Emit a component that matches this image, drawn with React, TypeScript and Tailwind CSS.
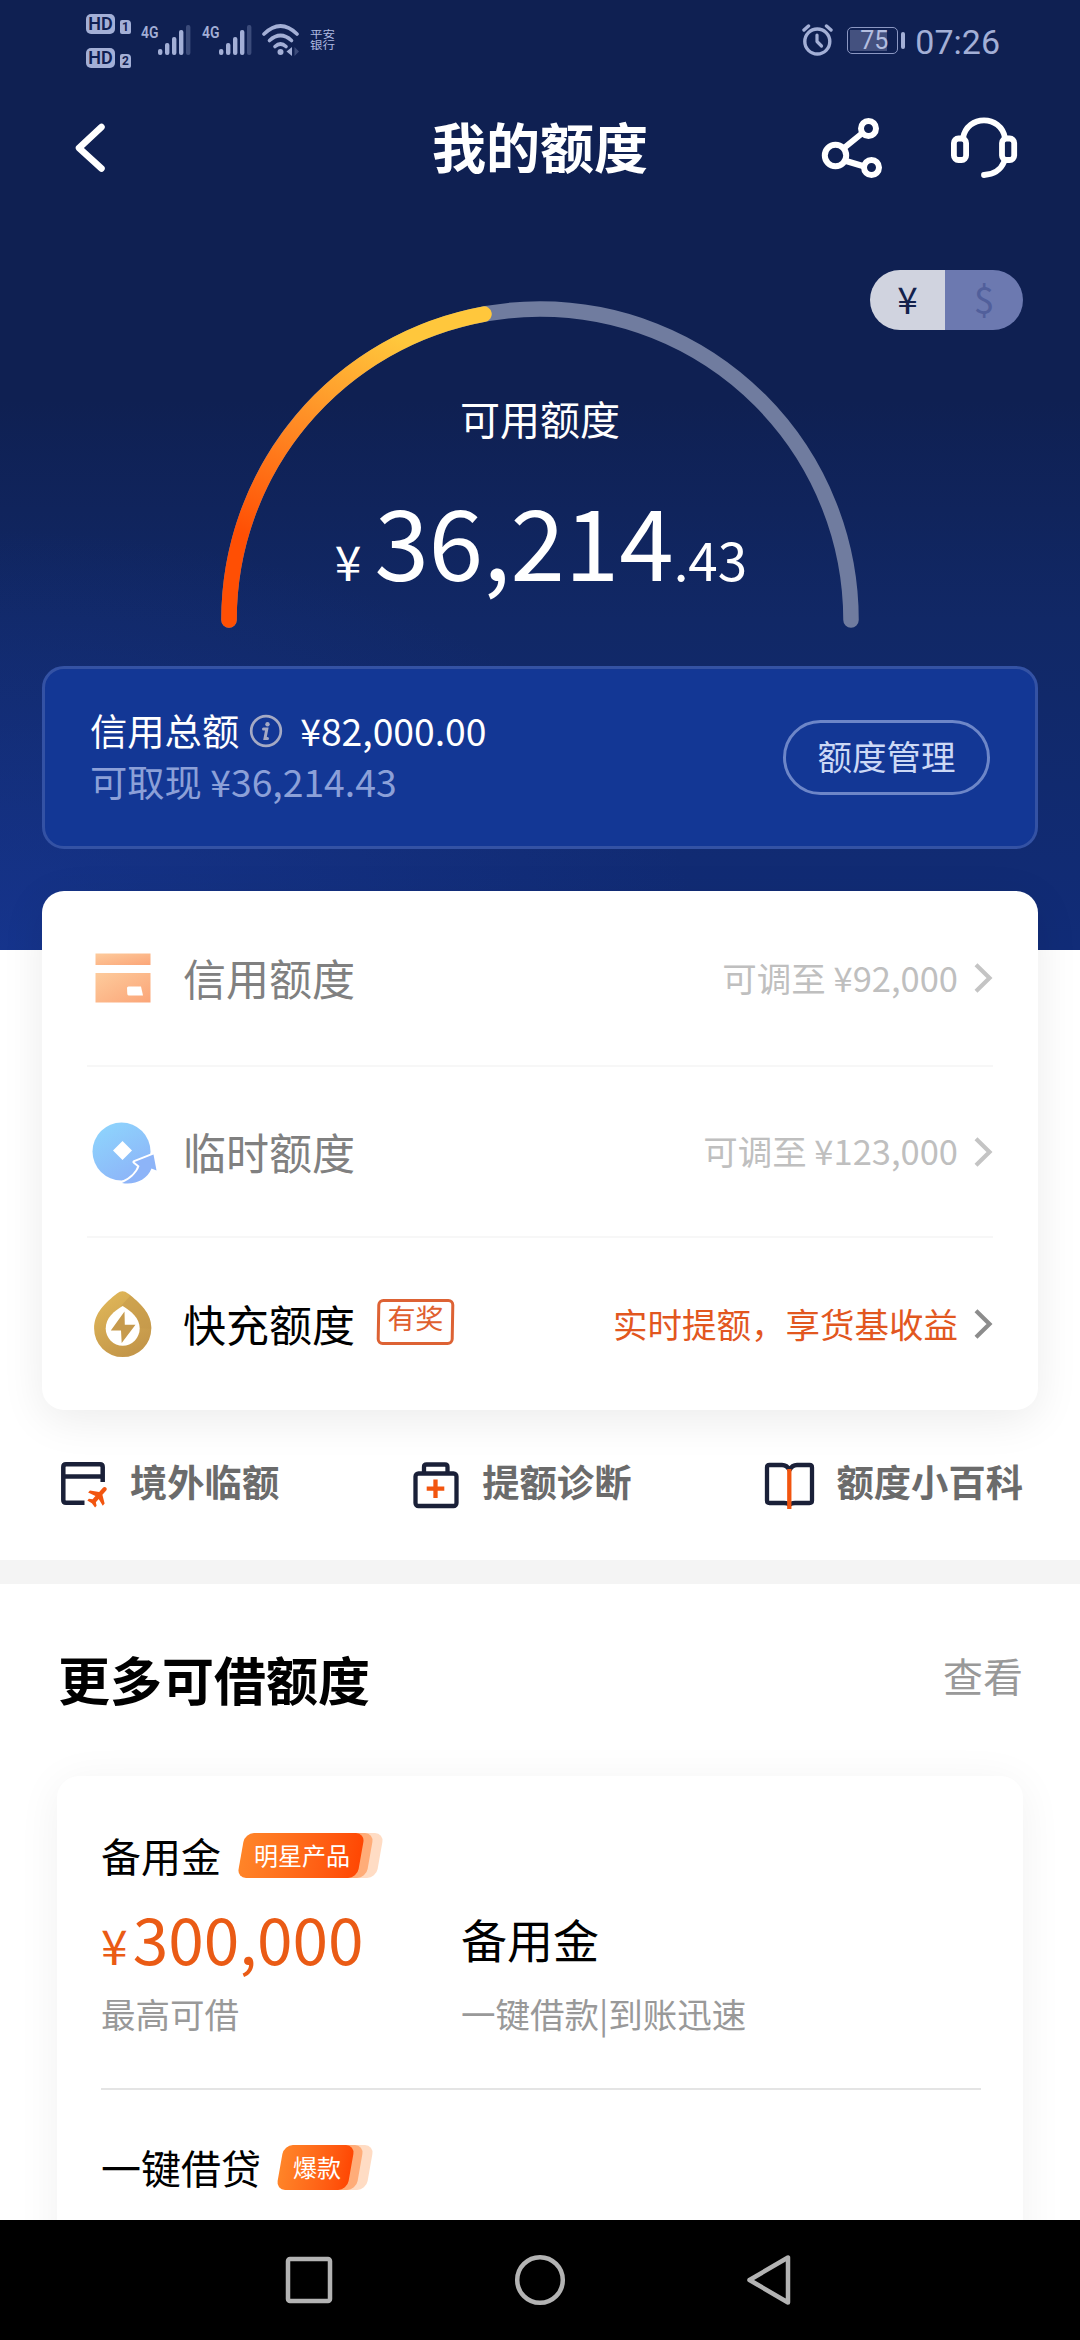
import type { ReactNode } from 'react';

function SignalBars() {
  return (
    <svg width="47" height="32" viewBox="0 0 47 32" fill="#a3afd6">
      <text x="0" y="14" fontSize="17" fontWeight="600" textLength="17.5" lengthAdjust="spacingAndGlyphs" fontFamily="Roboto, sans-serif">4G</text>
      <rect x="17" y="25" width="4.4" height="6" rx="2" />
      <rect x="24" y="19" width="4.4" height="12" rx="2" />
      <rect x="31" y="13" width="4.4" height="18" rx="2" />
      <rect x="38" y="6" width="4.4" height="25" rx="2" />
      <rect x="45" y="1" width="4.4" height="30" rx="2" opacity="0.3" />
    </svg>
  );
}

function HdBadge({ n }: { n: string }) {
  return (
    <div className="flex h-5 items-end gap-[5px]">
      <div className="flex h-5 w-[29px] items-center justify-center rounded-[5px] bg-[#a3afd6] font-['Roboto'] text-[18px] leading-none font-semibold text-[#102052]">
        HD
      </div>
      <div className="flex h-[14px] w-[11px] items-center justify-center rounded-[2px] rounded-tr-[4px] bg-[#a3afd6] font-['Roboto'] text-[12px] leading-none font-bold text-[#102052]">
        {n}
      </div>
    </div>
  );
}

function StatusBar() {
  return (
    <div className="flex h-[81px] justify-between pr-[80px] pl-[86px]">
      <div className="flex">
        <div className="flex flex-col gap-[14px] pt-[14px]">
          <HdBadge n="1" />
          <HdBadge n="2" />
        </div>
        <div className="ml-[10px] flex gap-[14px] pt-[24px] [&>svg]:overflow-visible">
          <SignalBars />
          <SignalBars />
        </div>
        <svg className="mt-[23px] ml-[12px]" width="40" height="34" viewBox="0 0 40 34" fill="none" stroke="#a3afd6" strokeWidth="3.6" strokeLinecap="round">
          <path d="M3 11 Q19.500 -5 36 11" />
          <path d="M8.500 17.500 Q19.500 7.500 30.500 17.500" />
          <path d="M14 23.500 Q19.500 18.500 25 23.500" />
          <circle cx="19.500" cy="29" r="3" fill="#a3afd6" stroke="none" />
          <path d="M31 24 V33 L25.500 28.500Z" fill="#a3afd6" stroke="none" />
          <path d="M33.500 24 V33 L38 28.500Z" fill="#a3afd6" opacity="0.3" stroke="none" />
        </svg>
        <div className="mt-[26px] ml-[9px] flex h-[28px] w-[30px] scale-y-[0.78] flex-col text-[12.500px] leading-[14px] whitespace-nowrap text-[#b0bbe0]">
          <span>平安</span>
          <span>银行</span>
        </div>
      </div>
      <div className="flex pt-[24px]">
        <svg width="31" height="32" viewBox="0 0 31 32" fill="none" stroke="#a3afd6" strokeLinecap="round" strokeLinejoin="round">
          <circle cx="15.300" cy="17.500" r="12.500" strokeWidth="3.400" />
          <path d="M15 11 V17.500 L19.500 22" strokeWidth="3.200" />
          <path d="M2 6 L6.500 2 M24.500 2 L29 6" strokeWidth="3.400" />
        </svg>
        <div className="mt-[3px] ml-[14px] flex h-[27px] w-[51px] rounded-[5px] border-[1.500px] border-[#8b97c2] p-[2px]">
          <div className="h-full w-[37px] bg-[#44517f]">
            <div className="flex h-full w-[50px] items-center justify-center pr-[2px] font-['Roboto'] text-[25px] leading-none text-[#b3bee0]">
              75
            </div>
          </div>
        </div>
        <div className="mt-[8px] ml-[3px] h-[17px] w-[4px] rounded-[2px] bg-[#a3afd6]" />
        <div className="ml-[10px] font-['Roboto'] text-[34px] leading-[36px] text-[#a3afd6]">07:26</div>
      </div>
    </div>
  );
}

function TitleBar() {
  return (
    <div className="grid h-[134px] grid-cols-[1fr_auto_1fr] items-center px-[62px] text-white">
      <svg className="ml-[9px]" width="38" height="56" viewBox="0 0 38 56" fill="none" stroke="currentColor" strokeWidth="6.500" strokeLinecap="round" strokeLinejoin="round">
        <path d="M30.500 7 L8 28 L30.500 48.500" />
      </svg>
      <h1 className="mb-1 text-[54px] leading-[60px] font-bold">我的额度</h1>
      <div className="flex items-center justify-end gap-[66px]">
        <svg width="64" height="64" viewBox="820 115 64 64" fill="none" stroke="currentColor" strokeWidth="6">
          <circle cx="835.500" cy="154.500" r="10.700" />
          <circle cx="868.500" cy="127.500" r="7.500" />
          <circle cx="871.500" cy="166.500" r="7.500" />
          <path d="M844 147 L862.500 132 M846 160 L864.500 165.500" />
        </svg>
        <svg width="68" height="64" viewBox="950 115 68 64" fill="none" stroke="currentColor" strokeWidth="5.800" strokeLinecap="round">
          <path d="M963 137 C967 113.500 1001 113.500 1005 137" />
          <rect x="953.900" y="137.500" width="12.200" height="21.500" rx="4.500" />
          <rect x="1002" y="137.500" width="12.200" height="21.500" rx="4.500" />
          <path d="M1004 161 Q999 173 984 174" />
        </svg>
      </div>
    </div>
  );
}

function Gauge() {
  return (
    <div className="mx-auto -mt-[30px] grid h-[330px] w-[640px]">
      <svg className="col-start-1 row-start-1" width="640" height="330" viewBox="220 300 640 330" fill="none" strokeWidth="15.500" strokeLinecap="round">
        <defs>
          <linearGradient id="arc" gradientUnits="userSpaceOnUse" x1="300" y1="560" x2="400" y2="340">
            <stop offset="0" stopColor="#ff4f04" />
            <stop offset="0.500" stopColor="#ff8a24" />
            <stop offset="1" stopColor="#ffc73c" />
          </linearGradient>
        </defs>
        <path d="M229 620 A311 311 0 0 1 851 620" stroke="#707c9f" />
        <path d="M229 620 A311 311 0 0 1 484 314.100" stroke="url(#arc)" />
      </svg>
      <div className="col-start-1 row-start-1 flex flex-col items-center pt-[98px] text-white">
        <div className="text-[40px] leading-[40px]">可用额度</div>
        <div className="mt-[51px] flex items-baseline pl-[2px] leading-none">
          <span className="mr-[13px] text-[48px] leading-none">¥</span>
          <span className="text-[98px] leading-none">36,214</span>
          <span className="text-[53px] leading-none">.43</span>
        </div>
      </div>
    </div>
  );
}

function CreditSummary() {
  return (
    <div className="mx-[42px] mt-[36px] flex h-[183px] items-center justify-between rounded-[22px] border-[3px] border-[#3452a4] bg-[#133795] pr-[45px] pl-[45px]">
      <div className="mb-[3px] flex flex-col text-[37.300px] leading-[51px]">
        <div className="flex items-center text-white">
          <span>信用总额</span>
          <svg className="mr-[17px] ml-[10px]" width="34" height="34" viewBox="0 0 34 34" fill="none" stroke="#a5aac4" strokeLinecap="round">
            <circle cx="17" cy="17" r="14.800" strokeWidth="2.700" />
            <circle cx="18.500" cy="10.300" r="2.200" fill="#a5aac4" stroke="none" />
            <path d="M14.500 15 H17.800 L16 24.500 H18.500" strokeWidth="3" />
          </svg>
          <span>¥82,000.00</span>
        </div>
        <div className="text-[#8ca0d8]">可取现 ¥36,214.43</div>
      </div>
      <button className="flex h-[75px] w-[207px] items-center justify-center rounded-full border-[3px] border-[#6d86c8] pb-1 text-[34.500px] leading-none text-[#ccd8f5]">
        额度管理
      </button>
    </div>
  );
}

function CardIcon() {
  return (
    <svg width="66" height="66" viewBox="92 945 66 66">
      <defs>
        <linearGradient id="peach" x1="0" y1="0" x2="1" y2="1">
          <stop offset="0" stopColor="#fdcb9c" />
          <stop offset="1" stopColor="#fba578" />
        </linearGradient>
      </defs>
      <rect x="95.500" y="953.500" width="55" height="11.500" fill="url(#peach)" />
      <rect x="95.500" y="973" width="55" height="29.500" fill="url(#peach)" />
      <path d="M128.500 986.500 H141 L143 995.500 H129Q127.500 995.500 127.300 994 L127 988 Q127 986.500 128.500 986.500Z" fill="#fff" />
    </svg>
  );
}

function CoinIcon() {
  return (
    <svg width="66" height="66" viewBox="92 1118 66 66">
      <defs>
        <linearGradient id="sky" x1="0.100" y1="0" x2="0.700" y2="1">
          <stop offset="0" stopColor="#8ed6fd" />
          <stop offset="1" stopColor="#8db4f8" />
        </linearGradient>
      </defs>
      <circle cx="121.500" cy="1150.500" r="29" fill="url(#sky)" />
      <path d="M122.500 1140 L132 1149.500 L122.500 1159 L113 1149.500Z" fill="#fff" />
      <path d="M122 1182 C129 1179 137 1173 139.500 1165 L134.500 1161 L153.500 1153.500 L156.500 1169.500 L151.500 1167.500 C147 1179 134 1184.500 122 1182Z" fill="none" stroke="#fff" strokeWidth="4" strokeLinejoin="round" />
      <path d="M122 1182 C129 1179 137 1173 139.500 1165 L134.500 1161 L153.500 1153.500 L156.500 1169.500 L151.500 1167.500 C147 1179 134 1184.500 122 1182Z" fill="#8db4f8" />
    </svg>
  );
}

function DropIcon() {
  return (
    <svg width="66" height="70" viewBox="92 1288 66 70">
      <defs>
        <linearGradient id="gold" x1="0" y1="0" x2="0.500" y2="1">
          <stop offset="0" stopColor="#e3ba5a" />
          <stop offset="1" stopColor="#c4974a" />
        </linearGradient>
      </defs>
      <path d="M117 1292.500 Q122.500 1288 128 1292.500 C140 1302 151.300 1312 151.300 1327.500 A28.600 28.600 0 0 1 94.100 1327.500 C94.100 1312 105 1302 117 1292.500Z" fill="url(#gold)" />
      <path d="M128 1292.500 C140 1302 151.300 1312 151.300 1327.500 L140 1327 C139.700 1317 131 1310 121 1305 L130 1295Z" fill="#c4974a" opacity="0.500" />
      <path d="M122.700 1305 C131 1310 139.700 1317 139.700 1327.500 A17 17.300 0 0 1 105.700 1327.500 C105.700 1317 114 1310 122.700 1305Z" fill="#fff" />
      <path d="M124.500 1310.500 L110.800 1329.500 H121 L121.700 1342 L135.500 1323.700 H124.800Z" fill="#c69a4d" />
    </svg>
  );
}

type LimitRowProps = {
  icon: ReactNode;
  name: string;
  nameClass: string;
  hint: string;
  hintClass: string;
  arrow: string;
  tag?: string;
  className: string;
};

function LimitRow({ icon, name, nameClass, hint, hintClass, arrow, tag, className }: LimitRowProps) {
  return (
    <div className={`mx-[45px] flex items-center pl-[5px] ${className}`}>
      {icon}
      <span className={`ml-[25px] text-[43px] leading-[52px] ${nameClass}`}>{name}</span>
      {tag && (
        <span className="mb-[4px] ml-[22px] flex h-[46px] w-[77px] -skew-x-1 justify-center rounded-[6px] border-[3.500px] border-[#dd6234] text-[28px] leading-[31px] text-[#e0602f]">
          {tag}
        </span>
      )}
      <span className={`mb-[3px] ml-auto text-[34.500px] leading-[44px] ${hintClass}`}>{hint}</span>
      <svg className="ml-[15px]" width="20" height="32" viewBox="0 0 20 32" fill="none" stroke={arrow} strokeWidth="4.200">
        <path d="M3 2.800 L16.500 16 L3 29.200" />
      </svg>
    </div>
  );
}

function LimitCard() {
  return (
    <section className="relative mx-[42px] -mt-[59px] h-[519px] rounded-[22px] bg-white shadow-[0_10px_44px_rgba(0,0,0,0.08)]">
      <LimitRow className="h-[176px] border-b-2 border-[#f7f7f7]" icon={<CardIcon />} name="信用额度" nameClass="mb-[2px] text-[#808080]" hint="可调至 ¥92,000" hintClass="text-[#bfbfbf]" arrow="#c4c4c4" />
      <LimitRow className="h-[171px] border-b-2 border-[#f7f7f7]" icon={<CoinIcon />} name="临时额度" nameClass="mb-[1px] text-[#808080]" hint="可调至 ¥123,000" hintClass="text-[#bfbfbf]" arrow="#c4c4c4" />
      <LimitRow className="h-[172px]" icon={<DropIcon />} name="快充额度" nameClass="mb-[3px] text-black" tag="有奖" hint="实时提额，享货基收益" hintClass="text-[#e2571f]" arrow="#8c8c8c" />
    </section>
  );
}

function AbroadIcon() {
  return (
    <svg width="52" height="52" viewBox="58 1460 52 52" fill="none" stroke="#1a2038" strokeWidth="4.500">
      <path d="M102.700 1483 V1468 Q102.700 1465.300 100 1465.300 H66 Q63.300 1465.300 63.300 1468 V1501 Q63.300 1503.700 66 1503.700 H84.500" />
      <path d="M63 1477.500 H103" />
      <g transform="translate(98 1497) rotate(42) translate(-11.500 -12)" fill="#f2550f" stroke="none">
        <path d="M21.500 16v-2.800l-7.500-5V2.500c0-1.200-1-2.200-2.200-2.200s-2.200 1-2.200 2.200V8.200l-7.800 5v2.800l7.800-2.300V18l-3 2.200V22.500l5.200-1 5.200 1v-2.300L14 18v-4.300l7.500 2.300z" />
      </g>
    </svg>
  );
}

function DiagnoseIcon() {
  return (
    <svg width="50" height="50" viewBox="412 1459 50 50" fill="none" stroke="#1a2038" strokeWidth="4.300">
      <rect x="416.500" y="1472.500" width="41" height="32.500" rx="3" />
      <path d="M425 1472 V1466 Q425 1463.500 427.500 1463.500 H446 Q448.500 1463.500 448.500 1466 V1472" />
      <path d="M427.700 1487.700 H445.300 M436.500 1478.500 V1497" stroke="#f2550f" />
    </svg>
  );
}

function BookIcon() {
  return (
    <svg width="52" height="52" viewBox="763 1460 52 52" fill="none" stroke="#1a2038" strokeWidth="4.300">
      <path d="M788.500 1471 Q786 1466 781 1466 H768.500 Q766 1466 766 1468.500 V1501.500 Q766 1504 768.500 1504 H783 Q787 1504 788.500 1506 Q790 1504 794 1504 H808.500 Q811 1504 811 1501.500 V1468.500 Q811 1466 808.500 1466 H796 Q791 1466 788.500 1471Z" />
      <path d="M788.300 1470 V1510" stroke="#f2550f" />
    </svg>
  );
}

function Shortcut({ icon, label, gap }: { icon: ReactNode; label: string; gap: string }) {
  return (
    <div className={`flex items-center ${gap}`}>
      {icon}
      <span className="mb-[8px] text-[37.300px] leading-[44px] font-bold text-[#6b6b6b]">{label}</span>
    </div>
  );
}

function Ribbon({ label, className }: { label: string; className: string }) {
  return (
    <span className={`relative isolate block h-[45px] ${className}`}>
      <span className="absolute inset-y-0 right-[4px] left-[40px] -skew-x-10 rounded-[9px] bg-[#ffdcc4]" />
      <span className="absolute inset-y-0 right-[14px] left-[30px] -skew-x-10 rounded-[9px] bg-[#ffac78]" />
      <span className="absolute inset-y-0 right-[23px] left-[4px] -skew-x-10 rounded-[9px] bg-gradient-to-r from-[#ff8428] to-[#ff4703]" />
      <span className="relative flex h-full items-center pb-[1px] pl-[17px] text-[24px] leading-none text-white">{label}</span>
    </span>
  );
}

function MoreLimits() {
  return (
    <section>
      <div className="flex h-[192px] items-center justify-between pr-[57px] pl-[58px]">
        <h2 className="mb-[2px] text-[52px] leading-[60px] font-bold text-black">更多可借额度</h2>
        <span className="mb-[11px] text-[40px] leading-[48px] text-[#999]">查看</span>
      </div>
      <div className="mx-[57px] h-[500px] rounded-[22px] bg-white pr-[42px] pl-[44px] pt-[54px] shadow-[0_6px_44px_rgba(0,0,0,0.06)]">
        <div className="flex h-[50px] items-center gap-[16px]">
          <span className="text-[40px] leading-[48px] text-black">备用金</span>
          <Ribbon label="明星产品" className="w-[147px]" />
        </div>
        <div className="mt-[17px] grid grid-cols-[360px_1fr]">
          <div>
            <div className="flex h-[80px] items-baseline text-[#ea5b15]">
              <span className="mr-[5px] text-[48px] leading-[80px]">¥</span>
              <span className="text-[64px] leading-[80px]">300,000</span>
            </div>
            <div className="mt-[14px] text-[34.500px] leading-[44px] text-[#999]">最高可借</div>
          </div>
          <div>
            <div className="h-[80px] text-[46px] leading-[82px] text-black">备用金</div>
            <div className="mt-[14px] text-[34.500px] leading-[44px] text-[#999]">一键借款|到账迅速</div>
          </div>
        </div>
        <div className="mt-[53px] h-[2px] bg-[#e4e4e4]" />
        <div className="mt-[52px] flex h-[50px] items-center gap-[15px]">
          <span className="text-[40px] leading-[48px] text-black">一键借贷</span>
          <Ribbon label="爆款" className="w-[98px]" />
        </div>
      </div>
    </section>
  );
}

function NavBar() {
  return (
    <nav className="relative flex h-[120px] items-center justify-between bg-black px-[283px]">
      <svg width="52" height="56" viewBox="0 0 52 56" fill="none" stroke="#b3b3b3" strokeWidth="4.500">
        <rect x="5" y="7" width="42" height="42" rx="2" />
      </svg>
      <svg width="56" height="56" viewBox="0 0 56 56" fill="none" stroke="#b3b3b3" strokeWidth="4.500">
        <circle cx="28" cy="28" r="22.800" />
      </svg>
      <svg width="52" height="56" viewBox="0 0 52 56" fill="none" stroke="#b3b3b3" strokeWidth="4.500" strokeLinejoin="round">
        <path d="M43 5.500 V50.500 L4.500 28Z" />
      </svg>
    </nav>
  );
}

export default function App() {
  return (
    <div className="flex h-[2340px] w-[1080px] flex-col overflow-hidden bg-white font-['Noto_Sans_CJK_SC',sans-serif]">
      <div className="h-[2220px] shrink-0 overflow-hidden">
        <header className="h-[950px] bg-[radial-gradient(ellipse_700px_420px_at_0%_100%,rgba(26,60,160,0.5),transparent),linear-gradient(180deg,#0f2052_0px,#0f2052_400px,#112866_620px,#112c78_950px)]">
          <StatusBar />
          <TitleBar />
          <div className="mt-[55px] flex justify-end pr-[57px]">
            <div className="relative flex h-[60px] w-[153px] overflow-hidden rounded-full text-[37px] leading-[56px]">
              <span className="w-[75px] bg-[#d0d3df] text-center text-[#14214c]">¥</span>
              <span className="w-[78px] bg-[#6c79b0] text-center text-[#515f9b]">$</span>
            </div>
          </div>
          <Gauge />
          <CreditSummary />
        </header>
        <LimitCard />
        <div className="flex h-[150px] items-center justify-between pt-[2px] pr-[57px] pb-[2px] pl-[58px]">
          <Shortcut icon={<AbroadIcon />} label="境外临额" gap="gap-[20px]" />
          <Shortcut icon={<DiagnoseIcon />} label="提额诊断" gap="gap-[21px]" />
          <Shortcut icon={<BookIcon />} label="额度小百科" gap="gap-[21px]" />
        </div>
        <div className="h-[24px] bg-[#f4f4f4]" />
        <MoreLimits />
      </div>
      <NavBar />
    </div>
  );
}
